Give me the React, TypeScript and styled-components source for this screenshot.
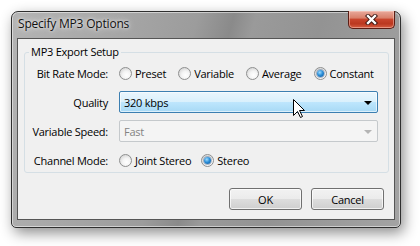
import React from 'react';
import styled, { createGlobalStyle } from 'styled-components';

const GlobalStyle = createGlobalStyle`
  html, body {
    margin: 0;
    background: #ffffff;
  }
  body {
    font-family: "Open Sans", "Noto Sans", "DejaVu Sans", sans-serif;
    font-size: 11px;
    letter-spacing: -0.25px;
    color: #000;
  }
`;

const Page = styled.div`
  position: relative;
  width: 420px;
  height: 246px;
  padding: 11px 0 0 11px;
  box-sizing: border-box;
  overflow: hidden;
`;

const Window = styled.div`
  width: 390px;
  height: 217px;
  box-sizing: border-box;
  display: flex;
  flex-direction: column;
  padding: 0 5px 7px 5px;
  border: 1px solid #2f2f2f;
  border-radius: 7px 7px 5px 5px;
  background: linear-gradient(
    105deg,
    #b4b4b4 0%,
    #a6a6a6 25%,
    #9c9c9c 42%,
    #8a8a8a 50%,
    #9a9a9a 55%,
    #939393 70%,
    #a3a3a3 100%
  );
  box-shadow: inset 0 0 0 1px rgba(255, 255, 255, 0.5),
    3px 5px 14px rgba(0, 0, 0, 0.45);
`;

const TitleBar = styled.div`
  height: 26px;
  display: flex;
  align-items: flex-start;
  justify-content: space-between;
`;

const Title = styled.div`
  padding: 4px 0 0 1px;
  font-size: 12px;
  line-height: 16px;
  letter-spacing: -0.2px;
  color: #111;
  text-shadow: 0 0 6px rgba(255, 255, 255, 0.9), 0 0 3px rgba(255, 255, 255, 0.7);
`;

const CloseButton = styled.div`
  width: 47px;
  height: 18px;
  margin-top: -1px;
  box-sizing: border-box;
  border: 1px solid #5b1d14;
  border-top: none;
  border-radius: 0 0 5px 5px;
  display: flex;
  align-items: center;
  justify-content: center;
  background: linear-gradient(
    #e9a99b 0%,
    #d9806b 40%,
    #c8442c 50%,
    #bb3820 75%,
    #d65e42 100%
  );
  box-shadow: inset 0 0 0 1px rgba(255, 220, 210, 0.45);
`;

const Client = styled.div`
  flex: 1;
  display: flex;
  flex-direction: column;
  box-sizing: border-box;
  border: 1px solid #555;
  background: #f0f0f0;
  padding: 5px 5px 0 6px;
`;

const GroupBox = styled.fieldset`
  margin: 0;
  padding: 0 10px 1px 0;
  border: 1px solid #d5dfe5;
  border-radius: 3px;
  min-width: 0;
`;

const Legend = styled.legend`
  padding: 0 2px;
  margin-left: 4px;
  line-height: 16px;
`;

const FormGrid = styled.div`
  display: grid;
  grid-template-columns: 83px minmax(0, 1fr);
  grid-auto-rows: 22px;
  column-gap: 11px;
  row-gap: 7px;
  padding-top: 2px;
  align-items: center;
`;

const FieldLabel = styled.div`
  text-align: right;
  white-space: nowrap;
`;

const RadioGroup = styled.div<{ $gap: number }>`
  display: flex;
  align-items: center;
  gap: ${(p) => p.$gap}px;
`;

const RadioOption = styled.label`
  display: inline-flex;
  align-items: center;
  gap: 3px;
  white-space: nowrap;
`;

const RadioCircle = styled.span<{ $checked?: boolean }>`
  width: 13px;
  height: 13px;
  box-sizing: border-box;
  border-radius: 50%;
  border: 1px solid #8e8f8f;
  display: inline-flex;
  align-items: center;
  justify-content: center;
  background: radial-gradient(circle at 60% 65%, #ffffff 0%, #f4f4f4 40%, #c8c8c8 100%);

  &::after {
    content: '';
    display: ${(p) => (p.$checked ? 'block' : 'none')};
    width: 7px;
    height: 7px;
    border-radius: 50%;
    background: radial-gradient(circle at 40% 35%, #9fdcff 0%, #2c8fd8 45%, #0d4f93 100%);
    box-shadow: 0 0 0 1px rgba(20, 60, 110, 0.35);
  }
`;

const Combo = styled.div<{ $hot?: boolean; $disabled?: boolean }>`
  height: 22px;
  box-sizing: border-box;
  display: flex;
  align-items: center;
  justify-content: space-between;
  padding: 0 5px 0 4px;
  border: 1px solid ${(p) => (p.$hot ? '#3c7fb1' : '#c5c9cc')};
  border-radius: 2px;
  color: ${(p) => (p.$disabled ? '#838383' : '#000')};
  background: ${(p) =>
    p.$hot
      ? 'linear-gradient(#eaf6fd 0%, #d9f0fc 50%, #bee6fd 51%, #a7d9f5 100%)'
      : '#f4f4f4'};
  box-shadow: ${(p) => (p.$hot ? 'inset 0 0 0 1px rgba(255,255,255,0.6)' : 'none')};
`;

const Arrow = styled.span<{ $disabled?: boolean }>`
  width: 0;
  height: 0;
  border-left: 4px solid transparent;
  border-right: 4px solid transparent;
  border-top: 4px solid ${(p) => (p.$disabled ? '#b4b4b4' : '#000')};
  margin-top: 1px;
`;

const Footer = styled.div`
  display: flex;
  justify-content: flex-end;
  gap: 9px;
  padding: 15px 5px 0 0;
`;

const Button = styled.div`
  width: 73px;
  height: 22px;
  box-sizing: border-box;
  display: flex;
  align-items: center;
  justify-content: center;
  border: 1px solid #707070;
  border-radius: 3px;
  background: linear-gradient(#f2f2f2 0%, #ebebeb 50%, #dddddd 51%, #cfcfcf 100%);
  box-shadow: inset 0 0 0 1px rgba(255, 255, 255, 0.7);
`;

const Cursor = styled.svg`
  position: absolute;
  left: 293px;
  top: 99px;
`;

const CloseGlyph = () => (
  <svg width="13" height="11" viewBox="0 0 13 11">
    <path d="M3 2 L10 9 M10 2 L3 9" stroke="#3a1510" strokeWidth="4.2" strokeLinecap="square" />
    <path d="M3 2 L10 9 M10 2 L3 9" stroke="#ffffff" strokeWidth="2.4" strokeLinecap="square" />
  </svg>
);

const Radio = ({ label, checked }: { label: string; checked?: boolean }) => (
  <RadioOption>
    <RadioCircle $checked={checked} />
    {label}
  </RadioOption>
);

export default function App() {
  return (
    <>
      <GlobalStyle />
      <Page>
        <Window>
          <TitleBar>
            <Title>Specify MP3 Options</Title>
            <CloseButton>
              <CloseGlyph />
            </CloseButton>
          </TitleBar>
          <Client>
            <GroupBox>
              <Legend>MP3 Export Setup</Legend>
              <FormGrid>
                <FieldLabel>Bit Rate Mode:</FieldLabel>
                <RadioGroup $gap={12}>
                  <Radio label="Preset" />
                  <Radio label="Variable" />
                  <Radio label="Average" />
                  <Radio label="Constant" checked />
                </RadioGroup>

                <FieldLabel>Quality</FieldLabel>
                <Combo $hot>
                  320 kbps
                  <Arrow />
                </Combo>

                <FieldLabel>Variable Speed:</FieldLabel>
                <Combo $disabled>
                  Fast
                  <Arrow $disabled />
                </Combo>

                <FieldLabel>Channel Mode:</FieldLabel>
                <RadioGroup $gap={10}>
                  <Radio label="Joint Stereo" />
                  <Radio label="Stereo" checked />
                </RadioGroup>
              </FormGrid>
            </GroupBox>
            <Footer>
              <Button>OK</Button>
              <Button>Cancel</Button>
            </Footer>
          </Client>
        </Window>
        <Cursor width="13" height="20" viewBox="0 0 13 20">
          <path
            d="M0.5 0.5 L0.5 16.5 L4.5 12.5 L7.5 18.5 L9.5 17.5 L6.5 11.5 L11.5 11.5 Z"
            fill="#fff"
            stroke="#000"
            strokeWidth="1"
            strokeLinejoin="miter"
          />
        </Cursor>
      </Page>
    </>
  );
}
